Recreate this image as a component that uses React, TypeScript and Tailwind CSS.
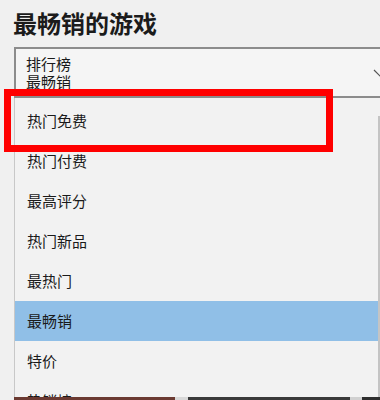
import React from "react";

const items = ["热门免费", "热门付费", "最高评分", "热门新品", "最热门", "最畅销", "特价", "热销榜"];

export default function App() {
  return (
    <div
      className="relative w-[380px] h-[400px] overflow-hidden bg-[#f0f0f0] text-[#1a1a1a]"
      style={{ fontFamily: '"Noto Sans CJK SC", "Noto Sans", sans-serif' }}
    >
      <div className="h-[47px] pl-[13px] pt-[10px]">
        <div className="text-[24px] font-bold leading-[26px] text-[#1b1b1b]">最畅销的游戏</div>
      </div>
      <div className="relative ml-[14px] w-[400px] h-[51px] border-2 border-[#8c8c8c] bg-[#f5f5f5] pl-[10px] pt-[6px] text-[15px] leading-[18px]">
        <div>排行榜</div>
        <div>最畅销</div>
        <svg className="absolute left-[357px] top-[20px]" width="16" height="9" viewBox="0 0 16 9">
          <path d="M1 1 L8 8 L15 1" fill="none" stroke="#555" strokeWidth="1.2" />
        </svg>
      </div>
      <div className="ml-[14px] flex h-[299px] overflow-hidden border-l border-[#c8c8c8] bg-[#f2f2f2]">
        <div className="flex-1 pt-[3px]">
          {items.map((t) => (
            <div
              key={t}
              className={
                "h-[40px] flex items-center pl-[12px] text-[15px] " +
                (t === "最畅销" ? "bg-[#90bfe7]" : "")
              }
            >
              {t}
            </div>
          ))}
        </div>
        <div className="w-[2px] flex flex-col pt-[18px]">
          <div className="flex-1 bg-[#c4c4c4]" />
        </div>
      </div>
      <div className="flex h-[3px] pl-[14px]">
        <div className="w-[161px] bg-[#6b3a32]" />
        <div className="w-[13px] bg-[#d8d8d8]" />
        <div className="w-[162px] bg-[#3a3a3a]" />
        <div className="w-[12px] bg-[#d0d0d0]" />
        <div className="flex-1 bg-[#2e2e2e]" />
      </div>
      <div className="absolute left-[4px] top-[89px] w-[329px] h-[63px] border-[7px] border-[#ff0000]" />
    </div>
  );
}
